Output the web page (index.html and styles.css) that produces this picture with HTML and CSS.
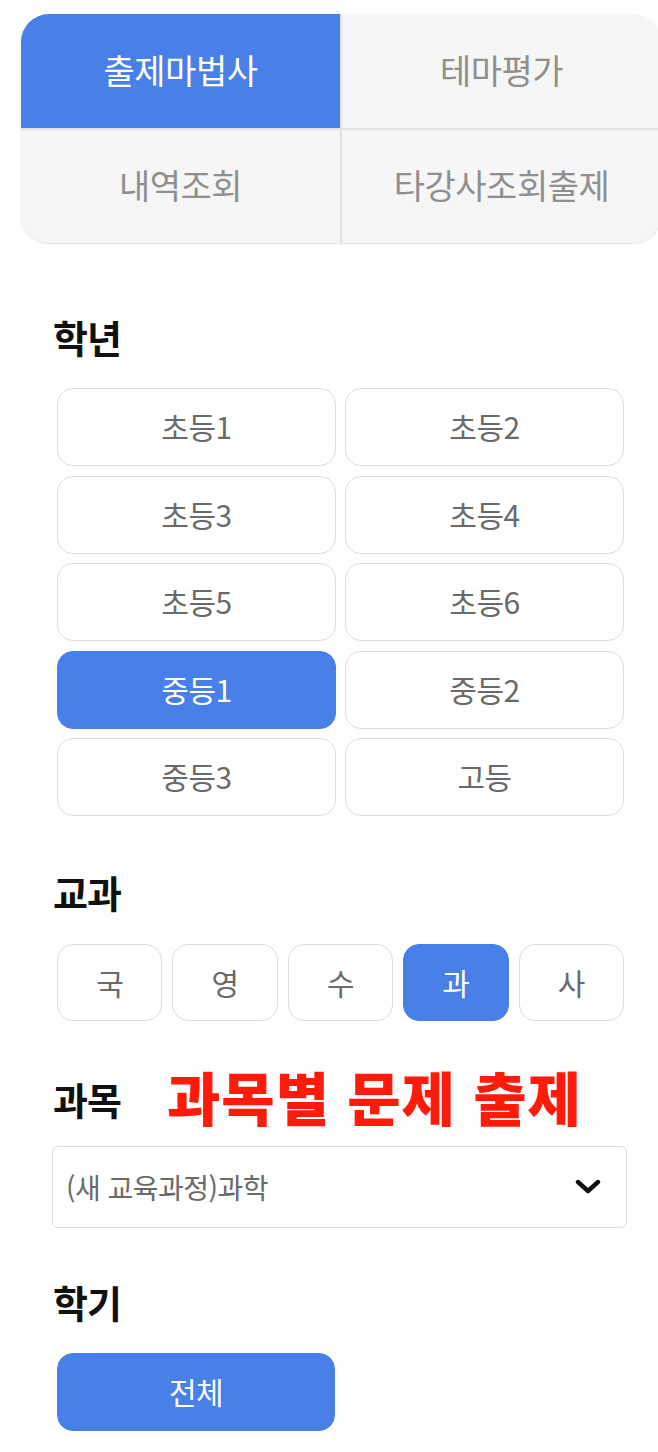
FILE: index.html
```html
<!DOCTYPE html>
<html lang="ko">
<head>
<meta charset="utf-8">
<title>출제마법사</title>
<link rel="stylesheet" href="styles.css">
</head>
<body>
<div class="tabs">
  <div class="tab active">출제마법사</div>
  <div class="tab right">테마평가</div>
  <div class="tab bottom">내역조회</div>
  <div class="tab right bottom">타강사조회출제</div>
</div>

<div class="section">
  <div class="label">학년</div>
  <div class="grade-grid">
    <div class="btn">초등1</div>
    <div class="btn">초등2</div>
    <div class="btn">초등3</div>
    <div class="btn">초등4</div>
    <div class="btn">초등5</div>
    <div class="btn">초등6</div>
    <div class="btn active">중등1</div>
    <div class="btn">중등2</div>
    <div class="btn">중등3</div>
    <div class="btn">고등</div>
  </div>
</div>

<div class="section s2">
  <div class="label">교과</div>
  <div class="subject-grid">
    <div class="btn">국</div>
    <div class="btn">영</div>
    <div class="btn">수</div>
    <div class="btn active">과</div>
    <div class="btn">사</div>
  </div>
</div>

<div class="section s3">
  <div class="label-row">
    <div class="label">과목</div>
    <div class="highlight">과목별 문제 출제</div>
  </div>
  <div class="select">
    <span class="select-text">(새 교육과정)과학</span>
    <svg class="chevron" width="26" height="16" viewBox="0 0 26 16"><polyline points="3,3 13,12 23,3" fill="none" stroke="#111" stroke-width="4.4" stroke-linecap="round" stroke-linejoin="round"/></svg>
  </div>
</div>

<div class="section s4">
  <div class="label">학기</div>
  <div class="term-row">
    <div class="btn active term">전체</div>
  </div>
</div>
</body>
</html>
```

FILE: styles.css
```css
* { box-sizing: border-box; }
html, body { margin: 0; padding: 0; background: #fff; }
body {
  font-family: "Noto Sans CJK KR", "Noto Sans", sans-serif;
  width: 658px;
}
.tabs {
  margin: 14px 0 0 21px;
  width: 640px;
  display: grid;
  grid-template-columns: 319px 1fr;
  grid-template-rows: 114px 115px;
  background: #f6f6f6;
  border-radius: 28px;
  overflow: hidden;
  box-shadow: 0 1px 2px rgba(0,0,0,0.12);
}
.tab {
  display: flex;
  align-items: center;
  justify-content: center;
  font-size: 34px;
  color: #8f8f8f;
  font-weight: 400;
  letter-spacing: -0.5px;
  padding-bottom: 4px;
}
.tab.right { border-left: 2px solid #e2e2e2; }
.tab.bottom { border-top: 2px solid #e2e2e2; }
.tab.active { background: #4880e8; color: #fff; }

.section { padding-left: 53px; }
.tabs + .section { margin-top: 74px; }
.label {
  font-size: 38px;
  font-weight: 700;
  line-height: 40px;
  color: #111;
  letter-spacing: -1px;
}
.grade-grid {
  margin: 31px 0 0 4px;
  width: 567px;
  display: grid;
  grid-template-columns: 1fr 1fr;
  column-gap: 9px;
  row-gap: 9.5px;
}
.btn {
  height: 78px;
  border: 1.5px solid #dcdcdc;
  border-radius: 16px;
  background: #fff;
  display: flex;
  align-items: center;
  justify-content: center;
  font-size: 30px;
  color: #6a6a6a;
  font-weight: 400;
  letter-spacing: -0.5px;
  padding-bottom: 2px;
}
.btn.active { background: #4880e8; border-color: #4880e8; color: #fff; }

.s2 { margin-top: 56px; }
.subject-grid {
  margin: 32px 0 0 4px;
  width: 567px;
  display: grid;
  grid-template-columns: repeat(5, 1fr);
  column-gap: 10px;
}
.subject-grid .btn { height: 77px; }

.s3 { margin-top: 48px; padding-left: 52px; }
.label-row {
  display: flex;
  align-items: center;
  height: 60px;
  padding-left: 1px;
}
.highlight {
  margin-left: 46px;
  font-size: 58px;
  font-weight: 900;
  color: #ff1a0a;
  letter-spacing: 1px;
  word-spacing: 0px;
  line-height: 60px;
  margin-top: -6px;
}
.select {
  margin-top: 17px;
  width: 575px;
  height: 82px;
  border: 1.5px solid #dcdcdc;
  border-radius: 6px;
  display: flex;
  align-items: center;
  justify-content: space-between;
  padding: 0 25px 0 13px;
}
.select-text { font-size: 28px; color: #6a6a6a; letter-spacing: -0.5px; }
.chevron { display: block; }

.s4 { margin-top: 54px; }
.term-row { margin: 31px 0 0 4px; display: flex; }
.btn.term { width: 278px; }
```
